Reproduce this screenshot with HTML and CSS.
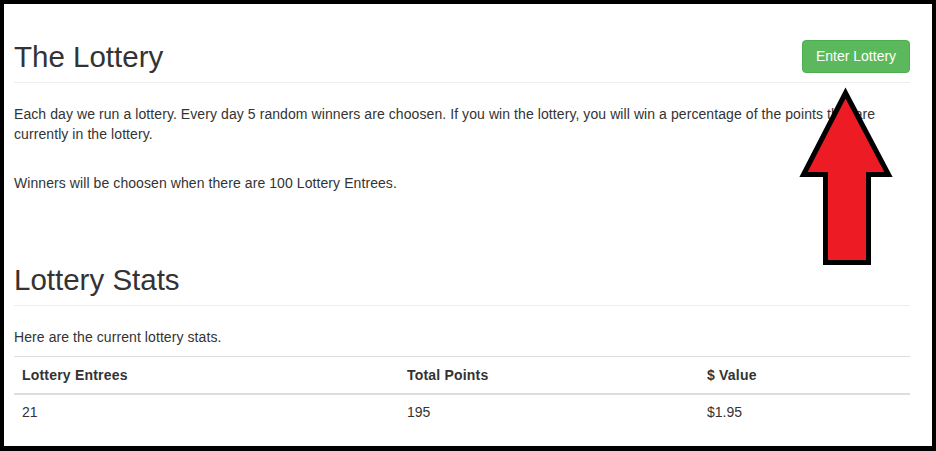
FILE: index.html
```html
<!DOCTYPE html>
<html>
<head>
<meta charset="utf-8">
<link rel="stylesheet" href="styles.css">
</head>
<body>
<div class="frame">
  <div class="page-header">
    <h2 class="title">The Lottery</h2>
    <button class="btn-success">Enter Lottery</button>
  </div>
  <p class="intro">Each day we run a lottery. Every day 5 random winners are choosen. If you win the lottery, you will win a percentage of the points that are currently in the lottery.</p>
  <p class="note">Winners will be choosen when there are 100 Lottery Entrees.</p>

  <div class="page-header second">
    <h2 class="title">Lottery Stats</h2>
  </div>
  <p class="lead-in">Here are the current lottery stats.</p>
  <table class="stats">
    <thead>
      <tr><th class="c1">Lottery Entrees</th><th class="c2">Total Points</th><th class="c3">$ Value</th></tr>
    </thead>
    <tbody>
      <tr><td>21</td><td>195</td><td>$1.95</td></tr>
    </tbody>
  </table>

  <svg class="arrow" width="104" height="188" viewBox="0 0 104 188">
    <polygon points="49.5,9 92.5,90.5 72.5,90.5 72.5,178.5 29.5,178.5 29.5,90.5 7.5,90.5" fill="#ed1c24" stroke="#000" stroke-width="5" stroke-linejoin="miter"/>
  </svg>
</div>
</body>
</html>
```
FILE: styles.css
```css
html, body {
  margin: 0;
  padding: 0;
  background: #000;
}
.frame {
  position: relative;
  box-sizing: border-box;
  height: 451px;
  width: 936px;
  border-style: solid;
  border-color: #000;
  border-width: 4px 4px 5px 4px;
  background: #fff;
  padding: 36px 22px 0 10px;
  overflow: hidden;
  font-family: "Liberation Sans", Arial, sans-serif;
  font-size: 14px;
  line-height: 20px;
  color: #333;
}
.page-header {
  display: flex;
  justify-content: space-between;
  align-items: center;
  padding-bottom: 9px;
  border-bottom: 1px solid #eee;
}
.page-header.second {
  margin-top: 70px;
}
.title {
  margin: 0;
  font-size: 29.5px;
  line-height: 33px;
  font-weight: 500;
  color: #333;
}
.btn-success {
  box-sizing: border-box;
  height: 33px;
  padding: 6px 12px;
  font-family: "Liberation Sans", Arial, sans-serif;
  font-size: 14px;
  line-height: 19px;
  color: #fff;
  background: #5cb85c;
  border: 1px solid #4cae4c;
  border-radius: 4px;
  width: 108px;
}
p {
  margin: 0;
  letter-spacing: 0.08px;
}
.intro {
  margin-top: 21px;
  margin-bottom: 29px;
}
.lead-in {
  margin-top: 21px;
  margin-bottom: 9px;
}
.stats {
  width: 896px;
  border-collapse: collapse;
  border-spacing: 0;
}
.stats th, .stats td {
  text-align: left;
  padding: 8px;
  line-height: 20px;
  vertical-align: top;
}
.stats th {
  font-weight: bold;
  letter-spacing: 0.2px;
  border-top: 1px solid #ddd;
  border-bottom: 2px solid #ddd;
}
.stats td {
  padding-top: 7px;
}
.stats .c1 { width: 369px; }
.stats .c2 { width: 284px; }
.arrow {
  position: absolute;
  left: 792px;
  top: 80px;
  pointer-events: none;
}
```
